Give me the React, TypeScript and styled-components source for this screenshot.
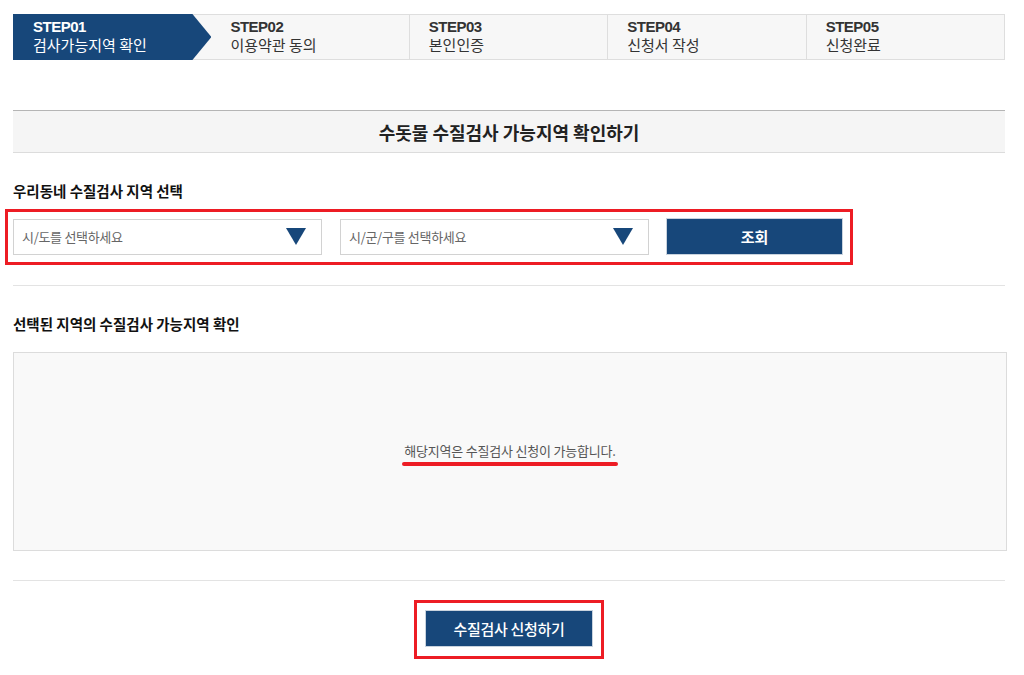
import styled, { createGlobalStyle } from 'styled-components';

const NAVY = '#17477a';
const RED = '#ed1c24';

const GlobalStyle = createGlobalStyle`
  html, body {
    margin: 0;
    padding: 0;
    background: #fff;
  }
  body {
    font-family: 'Noto Sans CJK KR', 'Noto Sans', sans-serif;
    color: #222;
  }
`;

const steps = [
  { no: 'STEP01', label: '검사가능지역 확인' },
  { no: 'STEP02', label: '이용약관 동의' },
  { no: 'STEP03', label: '본인인증' },
  { no: 'STEP04', label: '신청서 작성' },
  { no: 'STEP05', label: '신청완료' },
];

const App = () => {
  const current = 0;

  return (
    <StPage>
      <GlobalStyle />
      <StStepBar>
        {steps.map((s, i) => (
          <StStep key={s.no} $active={i === current} $afterActive={i === current + 1}>
            <StStepNo>{s.no}</StStepNo>
            <StStepLabel>{s.label}</StStepLabel>
          </StStep>
        ))}
      </StStepBar>

      <StTitleBox>수돗물 수질검사 가능지역 확인하기</StTitleBox>

      <StLabel $top={28}>우리동네 수질검사 지역 선택</StLabel>
      <StSearchMark>
        <StSelect>
          <span>시/도를 선택하세요</span>
          <StArrow />
        </StSelect>
        <StSelect>
          <span>시/군/구를 선택하세요</span>
          <StArrow />
        </StSelect>
        <StSearchButton>조회</StSearchButton>
      </StSearchMark>

      <StDivider $top={20} />

      <StLabel $top={28}>선택된 지역의 수질검사 가능지역 확인</StLabel>
      <StResultBox>
        <StResultText>해당지역은 수질검사 신청이 가능합니다.</StResultText>
      </StResultBox>

      <StDivider $top={29} />

      <StBottom>
        <StApplyMark>
          <StApplyButton>수질검사 신청하기</StApplyButton>
        </StApplyMark>
      </StBottom>
    </StPage>
  );
};

const StPage = styled.div`
  width: 992px;
  padding: 14px 0 0 13px;
`;

const StStepBar = styled.div`
  display: flex;
  height: 46px;
  border: 1px solid #dedede;
  box-sizing: border-box;
  background: #f7f7f7;
`;

const StStep = styled.div<{ $active: boolean; $afterActive: boolean }>`
  flex: 1;
  box-sizing: border-box;
  border-left: ${({ $active, $afterActive }) => ($active || $afterActive ? 'none' : '1px solid #dedede')};
  background: ${({ $active }) => ($active ? NAVY : 'transparent')};
  color: ${({ $active }) => ($active ? '#fff' : '#333')};
  clip-path: ${({ $active }) =>
    $active ? 'polygon(0 0, calc(100% - 19px) 0, 100% 50%, calc(100% - 19px) 100%, 0 100%)' : 'none'};
  margin: ${({ $active }) => ($active ? '-1px 0 -1px -1px' : '0')};
  padding-top: ${({ $active }) => ($active ? '4px' : '3px')};
  padding-left: ${({ $active }) => ($active ? '20px' : '19px')};
`;

const StStepNo = styled.div`
  font-family: 'Liberation Sans', Arial, sans-serif;
  font-weight: 700;
  font-size: 15px;
  line-height: 17px;
  letter-spacing: -0.5px;
`;

const StStepLabel = styled.div`
  font-size: 15px;
  line-height: 19px;
`;

const StTitleBox = styled.div`
  margin-top: 50px;
  height: 43px;
  box-sizing: border-box;
  border-top: 1px solid #b5b5b5;
  border-bottom: 1px solid #dcdcdc;
  background: #f5f5f5;
  display: flex;
  align-items: center;
  justify-content: center;
  font-size: 18px;
  font-weight: 700;
  color: #222;
`;

const StLabel = styled.div<{ $top: number }>`
  margin-top: ${({ $top }) => $top}px;
  font-size: 14.5px;
  font-weight: 700;
  line-height: 19px;
  color: #111;
`;

const StSearchMark = styled.div`
  margin: 9px 0 0 -8px;
  width: 848px;
  height: 56px;
  box-sizing: border-box;
  border: 3px solid ${RED};
  padding: 6px 7px 7px 5px;
  display: flex;
  align-items: center;
`;

const StSelect = styled.div`
  width: 309px;
  height: 36px;
  box-sizing: border-box;
  border: 1px solid #d2d2d2;
  background: #fff;
  display: flex;
  align-items: center;
  justify-content: space-between;
  padding: 0 15px 0 8px;
  margin-right: 18px;
  font-size: 13px;
  color: #666;
  letter-spacing: -0.3px;

  & + & {
    margin-right: 17px;
  }
`;

const StArrow = styled.span`
  width: 0;
  height: 0;
  border-left: 10px solid transparent;
  border-right: 10px solid transparent;
  border-top: 17px solid ${NAVY};
`;

const StSearchButton = styled.button`
  width: 177px;
  height: 37px;
  border: 1px solid #c9d3de;
  background: ${NAVY};
  color: #fff;
  font-family: inherit;
  font-size: 15px;
  font-weight: 700;
`;

const StDivider = styled.div<{ $top: number }>`
  margin-top: ${({ $top }) => $top}px;
  height: 1px;
  background: #e3e3e3;
`;

const StResultBox = styled.div`
  margin-top: 19px;
  width: 994px;
  height: 199px;
  box-sizing: border-box;
  border: 1px solid #dcdcdc;
  background: #f9f9f9;
  display: flex;
  align-items: center;
  justify-content: center;
  padding-bottom: 2px;
`;

const StResultText = styled.span`
  position: relative;
  font-size: 13px;
  color: #555;
  letter-spacing: -0.2px;

  &::after {
    content: '';
    position: absolute;
    left: -2px;
    right: -2px;
    bottom: -6px;
    height: 4px;
    border-radius: 2px;
    background: ${RED};
  }
`;

const StBottom = styled.div`
  display: flex;
  justify-content: center;
  margin-top: 19px;
`;

const StApplyMark = styled.div`
  border: 3px solid ${RED};
  padding: 7px 8px 9px 8px;
`;

const StApplyButton = styled.button`
  display: block;
  width: 168px;
  height: 37px;
  border: 1px solid #c9d3de;
  background: ${NAVY};
  color: #fff;
  font-family: inherit;
  font-size: 15px;
  font-weight: 500;
  letter-spacing: -0.3px;
`;

export default App;
